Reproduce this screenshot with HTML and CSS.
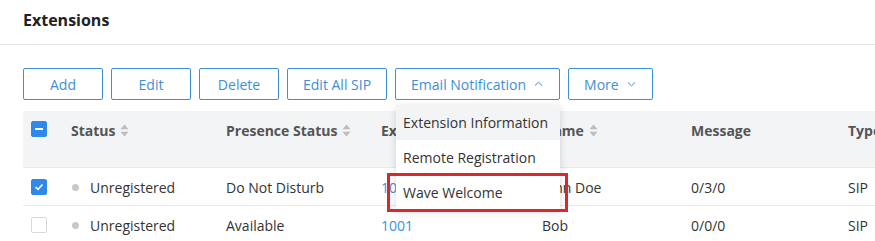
FILE: index.html
```html
<!DOCTYPE html>
<html lang="en">
<head>
  <meta charset="UTF-8" />
  <title>Extensions</title>
  <link rel="stylesheet" href="styles.css">
</head>
<body>

  <header class="page-head">
    <h1>Extensions</h1>
  </header>

  <main class="content">
    <div class="toolbar">
      <button class="btn">Add</button>
      <button class="btn">Edit</button>
      <button class="btn">Delete</button>
      <button class="btn">Edit All SIP</button>
      <div class="menu-wrap">
        <button class="btn">Email Notification
          <svg class="chev" width="9" height="6" viewBox="0 0 9 6"><path d="M1 4.5 L4.5 1.2 L8 4.5" fill="none" stroke="currentColor" stroke-width="1"/></svg>
        </button>
        <ul class="dropdown">
          <li class="hover">Extension Information</li>
          <li>Remote Registration</li>
          <li class="marked">Wave Welcome</li>
        </ul>
      </div>
      <button class="btn">More
        <svg class="chev" width="9" height="6" viewBox="0 0 9 6"><path d="M1 1.5 L4.5 4.8 L8 1.5" fill="none" stroke="currentColor" stroke-width="1"/></svg>
      </button>
    </div>

    <div class="table">
      <div class="row head">
        <div class="cell"><span class="check minus"></span></div>
        <div class="cell">Status <svg class="sort" width="9" height="13" viewBox="0 0 9 13"><path d="M4.5 0.5 L8.5 5.3 L0.5 5.3 Z M4.5 12.5 L8.5 7.7 L0.5 7.7 Z" fill="currentColor"/></svg></div>
        <div class="cell">Presence Status <svg class="sort" width="9" height="13" viewBox="0 0 9 13"><path d="M4.5 0.5 L8.5 5.3 L0.5 5.3 Z M4.5 12.5 L8.5 7.7 L0.5 7.7 Z" fill="currentColor"/></svg></div>
        <div class="cell">Extension <svg class="sort" width="9" height="13" viewBox="0 0 9 13"><path d="M4.5 0.5 L8.5 5.3 L0.5 5.3 Z M4.5 12.5 L8.5 7.7 L0.5 7.7 Z" fill="currentColor"/></svg></div>
        <div class="cell">Name <svg class="sort" width="9" height="13" viewBox="0 0 9 13"><path d="M4.5 0.5 L8.5 5.3 L0.5 5.3 Z M4.5 12.5 L8.5 7.7 L0.5 7.7 Z" fill="currentColor"/></svg></div>
        <div class="cell">Message</div>
        <div class="cell">Type</div>
      </div>
      <div class="row">
        <div class="cell"><span class="check on"><svg width="10" height="8" viewBox="0 0 10 8"><path d="M1.5 4 L4 6.3 L8.5 1.5" fill="none" stroke="#fff" stroke-width="1.6"/></svg></span></div>
        <div class="cell"><span class="dot"></span>Unregistered</div>
        <div class="cell">Do Not Disturb</div>
        <div class="cell"><a href="#">1000</a></div>
        <div class="cell">John Doe</div>
        <div class="cell">0/3/0</div>
        <div class="cell">SIP</div>
      </div>
      <div class="row">
        <div class="cell"><span class="check"></span></div>
        <div class="cell"><span class="dot"></span>Unregistered</div>
        <div class="cell">Available</div>
        <div class="cell"><a href="#">1001</a></div>
        <div class="cell">Bob</div>
        <div class="cell">0/0/0</div>
        <div class="cell">SIP</div>
      </div>
    </div>
  </main>

</body>
</html>
```

FILE: styles.css
```css
:root {
  --blue: #3d8fd8;
  --border: #e6eaed;
  --head-bg: #f2f4f5;
  --text: #333;
}

body {
  margin: 0;
  font-family: 'Open Sans', sans-serif;
  font-size: 14px;
  color: var(--text);
  background: #fff;
  overflow: hidden;
}

.page-head {
  height: 44px;
  border-bottom: 1px solid #e5e5e5;
  padding: 0 23px;
  display: flex;
  align-items: center;
}

.page-head h1 {
  margin: 0;
  margin-top: -4px;
  font-size: 16px;
  font-weight: 700;
  color: #222;
}

.content {
  padding: 23px 0 0 23px;
}

.toolbar {
  display: flex;
  gap: 8px;
  height: 32px;
}

.btn {
  height: 32px;
  min-width: 80px;
  padding: 0 15px;
  background: #fff;
  border: 1px solid var(--blue);
  border-radius: 2px;
  color: var(--blue);
  font-family: inherit;
  font-size: 14px;
  display: flex;
  align-items: center;
  justify-content: center;
  gap: 8px;
  cursor: pointer;
}

.chev {
  margin-right: 1px;
}

.menu-wrap {
  position: relative;
}

.dropdown {
  position: absolute;
  top: 37px;
  left: 1px;
  width: 164px;
  margin: 0;
  padding: 0;
  list-style: none;
  background: #fff;
  box-shadow: 0 2px 8px rgba(0,0,0,0.15);
  z-index: 10;
}

.dropdown li {
  height: 35px;
  line-height: 35px;
  padding: 0 7px;
  white-space: nowrap;
  position: relative;
}

.dropdown li.hover {
  background: var(--head-bg);
}

.dropdown li.marked::after {
  content: "";
  position: absolute;
  box-sizing: border-box;
  left: -9px;
  width: 181px;
  top: -2px;
  height: 39px;
  border: 3px solid #d8272d;
}

.table {
  margin-top: 11px;
  width: 900px;
}

.row {
  display: grid;
  grid-template-columns: 48px 155px 155px 161px 149px 157px 1fr;
  height: 37px;
  align-items: center;
  border-bottom: 1px solid var(--border);
}

.row.head {
  height: 56px;
  align-items: start;
  background: var(--head-bg);
  border-bottom: 1px solid var(--border);
  font-weight: 700;
  color: #555;
}

.row.head .cell {
  padding-top: 10px;
}

.cell {
  display: flex;
  align-items: center;
  white-space: nowrap;
  padding-top: 1px;
}

.cell:first-child {
  padding-left: 8px;
}

.sort {
  color: #bdbdbd;
  margin-left: 5px;
}

.check {
  width: 14px;
  height: 14px;
  border: 1px solid #d9d9d9;
  border-radius: 2px;
  background: #fff;
  display: flex;
  align-items: center;
  justify-content: center;
}

.check.on,
.check.minus {
  background: #2f88ec;
  border-color: #2f88ec;
}

.check.minus::before {
  content: "";
  width: 8px;
  height: 2px;
  background: #fff;
}

.dot {
  width: 7px;
  height: 7px;
  border-radius: 50%;
  background: #c8c8c8;
  margin: 0 11px 0 1px;
}

a {
  color: var(--blue);
  text-decoration: none;
}
```
